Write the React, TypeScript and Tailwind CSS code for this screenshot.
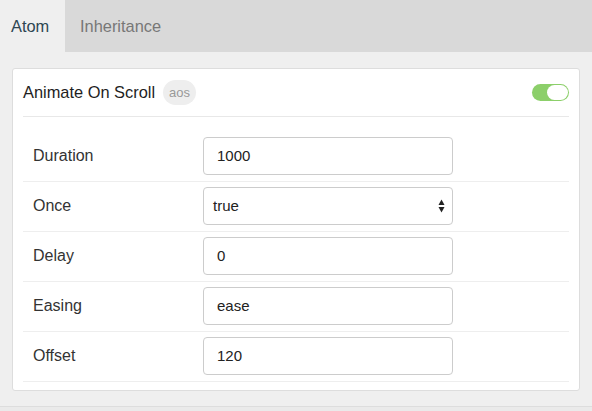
import React from "react";

const font = { fontFamily: '"Liberation Sans", Arial, Helvetica, sans-serif' };

function Row({ label, children }: { label: string; children: React.ReactNode }) {
  return (
    <div className="flex items-center pt-[5px] pb-[6px] border-b border-[#eeeeee]">
      <div className="w-[180px] pl-[10px] text-[16px] text-[#333333]">{label}</div>
      {children}
    </div>
  );
}

function TextInput({ value }: { value: string }) {
  return (
    <div className="w-[250px] h-[38px] border border-[#cccccc] rounded-[4px] bg-white flex items-center pl-[13px] text-[15px] text-[#222222]">
      {value}
    </div>
  );
}

function SelectBox({ value }: { value: string }) {
  return (
    <div className="w-[250px] h-[38px] border border-[#cccccc] rounded-[4px] bg-white flex items-center justify-between pl-[9px] pr-[7px] text-[15px] text-[#222222]">
      <span>{value}</span>
      <svg width="7" height="14" viewBox="0 0 7 14">
        <path d="M3.5 0.5 L6.5 6 L0.5 6 Z" fill="#222" />
        <path d="M0.5 8 L6.5 8 L3.5 13.5 Z" fill="#222" />
      </svg>
    </div>
  );
}

export default function App() {
  return (
    <div className="w-[592px] h-[411px] bg-[#efefef] flex flex-col overflow-hidden" style={font}>
      <div className="h-[52px] flex shrink-0">
        <div className="w-[65px] pl-[11px] flex items-center text-[16.4px] text-[#2d4653] bg-[#efefef]">Atom</div>
        <div className="flex-1 pl-[15px] flex items-center text-[16.4px] text-[#777777] bg-[#d9d9d9]">Inheritance</div>
      </div>
      <div className="mt-4 mx-3 bg-white border border-[#dddddd] rounded-[3px] px-[10px] pb-[8px]">
        <div className="h-[48px] flex items-center justify-between border-b border-[#e8e8e8]">
          <div className="flex items-center">
            <span className="text-[16.4px] text-[#1e1e1e]">Animate On Scroll</span>
            <span className="ml-[8px] h-[25px] px-[6px] rounded-full bg-[#eeeeee] text-[13px] text-[#999999] flex items-center">aos</span>
          </div>
          <div className="w-[37px] h-[17px] rounded-full bg-[#8ccf6a] flex items-center justify-end pr-[1px]">
            <div className="w-[21px] h-[15px] rounded-full bg-white"></div>
          </div>
        </div>
        <div className="pt-[15px]">
          <Row label="Duration"><TextInput value="1000" /></Row>
          <Row label="Once"><SelectBox value="true" /></Row>
          <Row label="Delay"><TextInput value="0" /></Row>
          <Row label="Easing"><TextInput value="ease" /></Row>
          <Row label="Offset"><TextInput value="120" /></Row>
        </div>
      </div>
      <div className="mt-[15px] flex-1 border-t border-[#dddddd] bg-[#eaeaea]"></div>
    </div>
  );
}
